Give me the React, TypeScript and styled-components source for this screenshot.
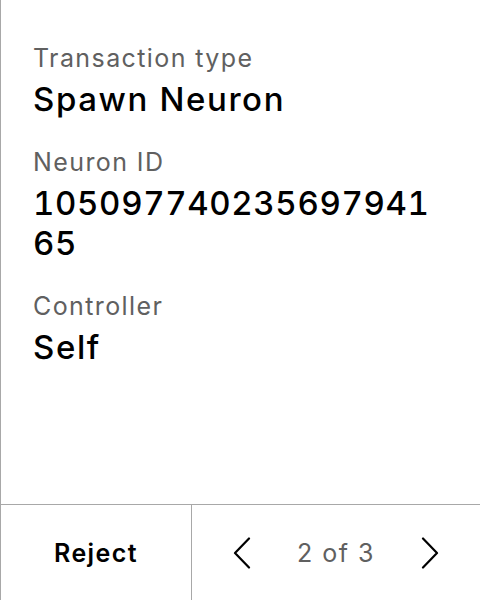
import React from "react";
import styled, { createGlobalStyle } from "styled-components";

const Global = createGlobalStyle`
  html, body { margin: 0; padding: 0; background: #ffffff; }
  body { font-family: Inter, "Noto Sans", sans-serif; color: #000; }
  * { box-sizing: border-box; }
`;

const Panel = styled.div`
  width: 480px;
  height: 600px;
  display: flex;
  flex-direction: column;
  border-left: 1px solid #a8a8a8;
  background: #fff;
`;

const Content = styled.div`
  flex: 1;
  padding: 42px 46px 0 32px;
  display: flex;
  flex-direction: column;
  gap: 27px;
`;

const Field = styled.div`
  display: flex;
  flex-direction: column;
  gap: 5px;
`;

const Label = styled.div`
  font-size: 25px;
  line-height: 32px;
  letter-spacing: 1.4px;
  color: #606060;
`;

const Value = styled.div<{ $numeric?: boolean }>`
  font-size: 33px;
  line-height: 40px;
  font-weight: 500;
  letter-spacing: ${(p) => (p.$numeric ? "0.65px" : "1.6px")};
  font-variant-numeric: ${(p) => (p.$numeric ? "tabular-nums" : "normal")};
  color: #000;
  word-break: break-all;
`;

const Footer = styled.div`
  height: 96px;
  border-top: 1px solid #a8a8a8;
  display: grid;
  grid-template-columns: 191px 1fr;
`;

const RejectButton = styled.button`
  border: none;
  border-right: 1px solid #a8a8a8;
  background: transparent;
  font-family: inherit;
  font-size: 25px;
  letter-spacing: 1.4px;
  font-weight: 600;
  color: #000;
  padding: 0;
  cursor: pointer;
`;

const Pager = styled.div`
  display: flex;
  align-items: center;
  justify-content: center;
  gap: 46px;
`;

const NavButton = styled.button`
  border: none;
  background: transparent;
  padding: 0;
  width: 18px;
  height: 32px;
  display: flex;
  align-items: center;
  justify-content: center;
  cursor: pointer;
`;

const PageText = styled.span`
  font-size: 25px;
  letter-spacing: 1.5px;
  color: #606060;
`;

const Chevron = ({ dir }: { dir: "left" | "right" }) => (
  <svg width="18" height="32" viewBox="0 0 18 32" fill="none">
    <path
      d={dir === "left" ? "M16 1.5 L2 16 L16 30.5" : "M2 1.5 L16 16 L2 30.5"}
      stroke="#000"
      strokeWidth="2.2"
      strokeLinecap="round"
      strokeLinejoin="round"
    />
  </svg>
);

export default function App() {
  return (
    <>
      <Global />
      <Panel>
        <Content>
          <Field>
            <Label>Transaction type</Label>
            <Value>Spawn Neuron</Value>
          </Field>
          <Field>
            <Label>Neuron ID</Label>
            <Value $numeric>10509774023569794165</Value>
          </Field>
          <Field>
            <Label>Controller</Label>
            <Value>Self</Value>
          </Field>
        </Content>
        <Footer>
          <RejectButton>Reject</RejectButton>
          <Pager>
            <NavButton aria-label="Previous">
              <Chevron dir="left" />
            </NavButton>
            <PageText>2 of 3</PageText>
            <NavButton aria-label="Next">
              <Chevron dir="right" />
            </NavButton>
          </Pager>
        </Footer>
      </Panel>
    </>
  );
}
